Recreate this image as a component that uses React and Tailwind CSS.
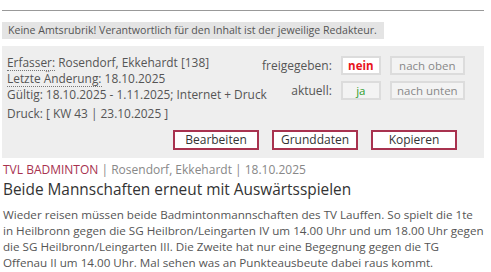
import React from 'react'

const ROT = '#a8324f'

function Kasten({ children, className = '' }) {
  return (
    <div className={`h-[19px] border-2 border-[#dcdcdc] flex items-center justify-center text-[11.5px] ${className}`}>
      {children}
    </div>
  )
}

function Knopf({ children }) {
  return (
    <button className="w-[86px] h-[20px] border-2 border-[#a8324f] bg-white text-[12px] leading-none text-[#333] flex items-center justify-center">
      {children}
    </button>
  )
}

export default function App() {
  return (
    <div className="w-[482px] ml-[2px] font-['Open_Sans',sans-serif] text-[#555]">
      <div className="h-[11px] border-b border-[#999]" />

      {/* Hinweis */}
      <div className="mt-[11px] inline-block bg-[#e4e4e4] pl-[6px] pr-[7px] text-[10.6px] leading-[17px]">
        Keine Amtsrubrik! Verantwortlich für den Inhalt ist der jeweilige Redakteur.
      </div>

      {/* Verwaltung */}
      <div className="mt-[6px] bg-[#eeeeee] pl-[5px] pr-[22px] pt-[8px] pb-[8px]">
        <div className="flex">
          <div className="flex-1 min-w-0 text-[11.9px] leading-[16px] whitespace-nowrap">
            <div><span className="border-b border-dotted border-[#777]">Erfasser:</span> Rosendorf, Ekkehardt [138]</div>
            <div><span className="border-b border-dotted border-[#777]">Letzte Änderung:</span> 18.10.2025</div>
            <div>Gültig: 18.10.2025 - 1.11.2025; Internet + Druck</div>
            <div className="mt-[3px]">Druck: [ KW 43 | 23.10.2025 ]</div>
          </div>
          <div className="w-[200px] shrink-0 grid grid-cols-[1fr_40px_75px] gap-x-[9px] gap-y-[6px] items-center text-[12px] mt-[2px] h-fit">
            <div className="text-right">freigegeben:</div>
            <Kasten className="bg-white text-[#e8141b] font-bold">nein</Kasten>
            <Kasten className="bg-[#f3f3f3] text-[#888]">nach oben</Kasten>
            <div className="text-right">aktuell:</div>
            <Kasten className="bg-[#f3f3f3] text-[#2e9e2e]">ja</Kasten>
            <Kasten className="bg-[#f3f3f3] text-[#888]">nach unten</Kasten>
          </div>
        </div>
        <div className="flex justify-end gap-[13px] mt-[9px] mr-[5px]">
          <Knopf>Bearbeiten</Knopf>
          <Knopf>Grunddaten</Knopf>
          <Knopf>Kopieren</Knopf>
        </div>
      </div>

      {/* Artikel */}
      <div className="mt-[4px] text-[12px] leading-[16px] text-[#888] pl-[1px]">
        <span style={{ color: ROT }}>TVL BADMINTON</span> | Rosendorf, Ekkehardt | 18.10.2025
      </div>
      <h1 className="mt-[1px] text-[15.4px] leading-[22px] text-[#333] pl-[1px]">
        Beide Mannschaften erneut mit Auswärtsspielen
      </h1>
      <p className="mt-[6px] w-[483px] text-[11.65px] leading-[16px] pl-[1px]">
        Wieder reisen müssen beide Badmintonmannschaften des TV Lauffen. So spielt die 1te in Heilbronn gegen die SG Heilbron/Leingarten IV um 14.00 Uhr und um 18.00 Uhr gegen die SG Heilbronn/Leingarten III. Die Zweite hat nur eine Begegnung gegen die TG Offenau II um 14.00 Uhr. Mal sehen was an Punkteausbeute dabei raus kommt.
      </p>
    </div>
  )
}
